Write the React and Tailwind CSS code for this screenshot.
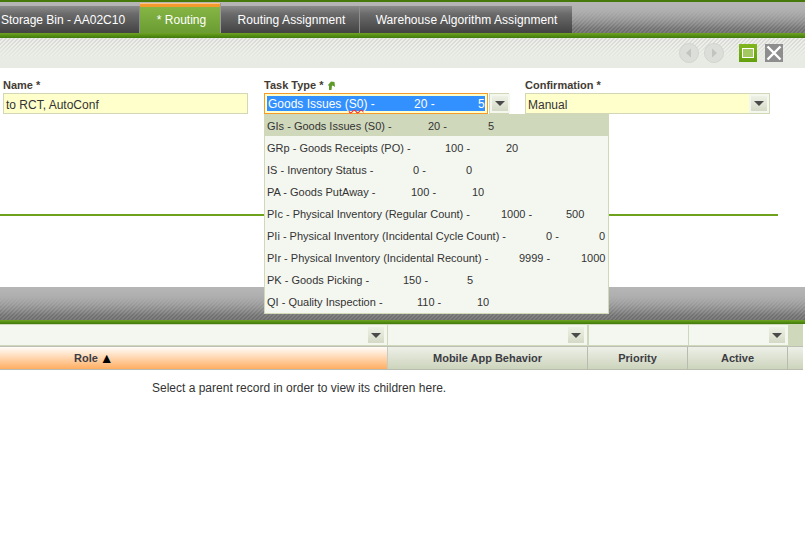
const hatchBar =
  "bg-[linear-gradient(#b6b6b6,#b0b0b0_25%,rgba(170,170,170,0)_85%),repeating-linear-gradient(135deg,rgba(0,0,0,0.13)_0,rgba(0,0,0,0.13)_1.414px,transparent_1.414px,transparent_2.828px),linear-gradient(#b0b0b0,#7c7c7c)]";

const greenBar = "bg-[linear-gradient(#6fa324,#568f14_50%,#3f7a0c)]";

function Arrow() {
  return (
    <div className="w-[20px] h-full shrink-0 border-2 border-[#f4f7ee] bg-[linear-gradient(#eef1e6,#d4dac6)] flex items-center justify-center">
      <div className="w-0 h-0 border-x-[5px] border-x-transparent border-t-[5px] border-t-[#4a4a4a]" />
    </div>
  );
}

const rows = [
  ["GIs - Goods Issues (S0) -", "20 -", "5", "w-[161px]", "w-[60px]"],
  ["GRp - Goods Receipts (PO) -", "100 -", "20", "w-[178px]", "w-[61px]"],
  ["IS - Inventory Status -", "0 -", "0", "w-[146px]", "w-[53px]"],
  ["PA - Goods PutAway -", "100 -", "10", "w-[144px]", "w-[61px]"],
  ["PIc - Physical Inventory (Regular Count) -", "1000 -", "500", "w-[234px]", "w-[65px]"],
  ["PIi - Physical Inventory (Incidental Cycle Count) -", "0 -", "0", "w-[279px]", "w-[53px]"],
  ["PIr - Physical Inventory (Incidental Recount) -", "9999 -", "1000", "w-[252px]", "w-[62px]"],
  ["PK - Goods Picking -", "150 -", "5", "w-[136px]", "w-[64px]"],
  ["QI - Quality Inspection -", "110 -", "10", "w-[150px]", "w-[60px]"],
];

function Tab({ children, className }) {
  return (
    <div className={"h-[27px] mt-[4px] flex items-center justify-center text-white text-xs tracking-[0.07px] border-r border-[#8d8d8d] bg-[linear-gradient(#8b8b8b,#6a6a6a_30%,#434343)] " + className}>
      {children}
    </div>
  );
}

function NavCircle({ flip }) {
  return (
    <div className="w-[20px] h-[20px] rounded-full bg-[#dcded9] border border-[#d2d4ce] flex items-center justify-center">
      <svg width="8" height="10" viewBox="0 0 8 10">
        <path d={flip ? "M2 0.5 L7 5 L2 9.5 Z" : "M6 0.5 L1 5 L6 9.5 Z"} fill="#c2c4bf" />
      </svg>
    </div>
  );
}

export default function App() {
  return (
    <div className="relative w-[805px] h-[534px] overflow-hidden bg-white text-xs text-[#333] font-['Liberation_Sans',Arial,sans-serif]">
      <div className="h-[2px] bg-[#47780a]" />
      <div className={"h-[31px] flex items-start " + hatchBar}>
        <Tab className="w-[140px] !justify-start pl-[1px] !tracking-normal">Storage Bin - AA02C10</Tab>
        <div className="w-[81px] h-[30px] mt-[1px] flex flex-col border-r border-[#9a9a9a]">
          <div className="h-[4px] bg-[#f59b2e] border-t border-[#f8c488]" />
          <div className="flex-1 flex items-center justify-center pl-[3px] text-white bg-[linear-gradient(#86b544,#6a9c33)]">* Routing</div>
        </div>
        <Tab className="w-[139px] pl-[3px]">Routing Assignment</Tab>
        <Tab className="w-[212px] !border-r-0 pl-[1px]">Warehouse Algorithm Assignment</Tab>
      </div>
      <div className={"h-[5px] " + greenBar} />
      <div className="h-[30px] flex items-center justify-end pr-[22px] bg-[linear-gradient(rgba(232,235,228,0),rgba(232,235,228,0)_20%,#e8ebe4_75%),repeating-linear-gradient(135deg,rgba(255,255,255,0.55)_0,rgba(255,255,255,0.55)_1.414px,transparent_1.414px,transparent_2.828px),linear-gradient(#d8d9d4,#e6e8e1)]">
        <div className="flex gap-[5px] mr-[15px]">
          <NavCircle />
          <NavCircle flip />
        </div>
        <div className="w-[18px] h-[18px] bg-[linear-gradient(#82b61e,#64a00c)] flex items-center justify-center mr-[8px]">
          <div className="w-[12px] h-[10px] border border-white bg-[#a4c860]" />
        </div>
        <div className="w-[18px] h-[18px] bg-[#8e8e8e] flex items-center justify-center">
          <svg width="16" height="16" viewBox="0 0 16 16">
            <path d="M1.5 1.5 L14.5 14.5 M14.5 1.5 L1.5 14.5" stroke="#fff" strokeWidth="2.4" />
          </svg>
        </div>
      </div>

      <div className="h-[146px] flex gap-[16px] pl-[3px] pt-[10px]">
        <div className="w-[245px]">
          <div className="h-[15px] text-[11px] font-bold text-[#443c34]">Name *</div>
          <div className="h-[21px] border border-[#d2d8b6] bg-[#ffffcc] pl-[2px] pt-[2px] flex items-center">to RCT, AutoConf</div>
        </div>
        <div className="w-[245px]">
          <div className="h-[15px] text-[11px] font-bold text-[#443c34] flex items-start gap-[4px]">
            Task Type *
            <svg width="7" height="9" viewBox="0 0 7 9" className="mt-[3px]">
              <path d="M1 9 L1 5 L0 4 L3 0.5 L6.5 1 L7 6 L5.5 5 L4 4.5 L3.5 9 Z" fill="#5d9a2a" />
            </svg>
          </div>
          <div className="h-[21px] flex gap-[1px]">
            <div className="w-[224px] border border-[#f59b2e] bg-[#ffffcc] p-[2px]">
              <div className="h-[15px] bg-[#3390ff] text-white flex items-center pl-[1px] pt-[1px]">
                <span className="w-[146px] shrink-0">Goods Issues (<span className="underline decoration-wavy decoration-red-500">S0</span>) -</span>
                <span className="w-[64px] shrink-0">20 -</span>
                <span>5</span>
              </div>
            </div>
            <div className="w-[20px] border border-[#d2d8b6]"><Arrow /></div>
          </div>
        </div>
        <div className="w-[245px]">
          <div className="h-[15px] text-[11px] font-bold text-[#443c34]">Confirmation *</div>
          <div className="h-[21px] flex border border-[#d2d8b6] bg-[#ffffcc]">
            <div className="flex-1 pl-[2px] pt-[2px] flex items-center">Manual</div>
            <Arrow />
          </div>
        </div>
      </div>

      <div className="w-[778px] h-[2px] bg-[#6ea21c]" />

      <div className="h-[71px]" />
      <div className={"h-[33px] " + hatchBar} />
      <div className={"h-[4px] " + greenBar} />

      <div className="h-[23px] flex w-[803px] pt-[1px] bg-[#d0d8bc] border-b border-[#bcc0b4]">
        <div className="w-[387px] flex bg-[#f4f7f0] mb-[1px] pr-[1px]"><div className="flex-1" /><Arrow /></div>
        <div className="w-[199px] ml-[1px] flex bg-[#f4f7f0] mb-[1px] pr-[1px]"><div className="flex-1" /><Arrow /></div>
        <div className="w-[99px] ml-[2px] bg-[#f4f7f0] mb-[1px]" />
        <div className="w-[99px] ml-[1px] flex bg-[#f4f7f0] mb-[1px] pr-[1px]"><div className="flex-1" /><Arrow /></div>
      </div>
      <div className="h-[23px] flex w-[803px] text-[11px] font-bold border-b border-[#b8bcb0] text-[#3c3c44]">
        <div className="w-[388px] flex items-center pl-[74px] gap-[2px] bg-[linear-gradient(#fffdfa,#ffae62)] border-r border-[#c8ccc0]">
          <span>Role</span><span className="text-sm leading-none text-black">▲</span>
        </div>
        <div className="w-[200px] flex items-center justify-center bg-[linear-gradient(#eef0e8,#ccd4bc)] border-r border-[#b8bcb0]">Mobile App Behavior</div>
        <div className="w-[100px] flex items-center justify-center bg-[linear-gradient(#eef0e8,#ccd4bc)] border-r border-[#b8bcb0]">Priority</div>
        <div className="w-[100px] flex items-center justify-center bg-[linear-gradient(#eef0e8,#ccd4bc)] border-r border-[#b8bcb0]">Active</div>
        <div className="flex-1 bg-[linear-gradient(#eef0e8,#ccd4bc)]" />
      </div>
      <div className="pl-[152px] pt-[10px]">Select a parent record in order to view its children here.</div>

      <div className="absolute left-[264px] top-[114px] w-[345px] border-x border-b border-[#d0d8b8] bg-[#f4f7f0] pb-[1px] text-[11px]">
        {rows.map((r, i) => (
          <div key={r[0]} className={"h-[22px] pl-[2px] pt-[2px] flex items-center whitespace-nowrap " + (i === 0 ? "bg-[#d0d8bc]" : "")}>
            <span className={"shrink-0 " + r[3]}>{r[0]}</span>
            <span className={"shrink-0 " + r[4]}>{r[1]}</span>
            <span>{r[2]}</span>
          </div>
        ))}
      </div>
    </div>
  );
}
